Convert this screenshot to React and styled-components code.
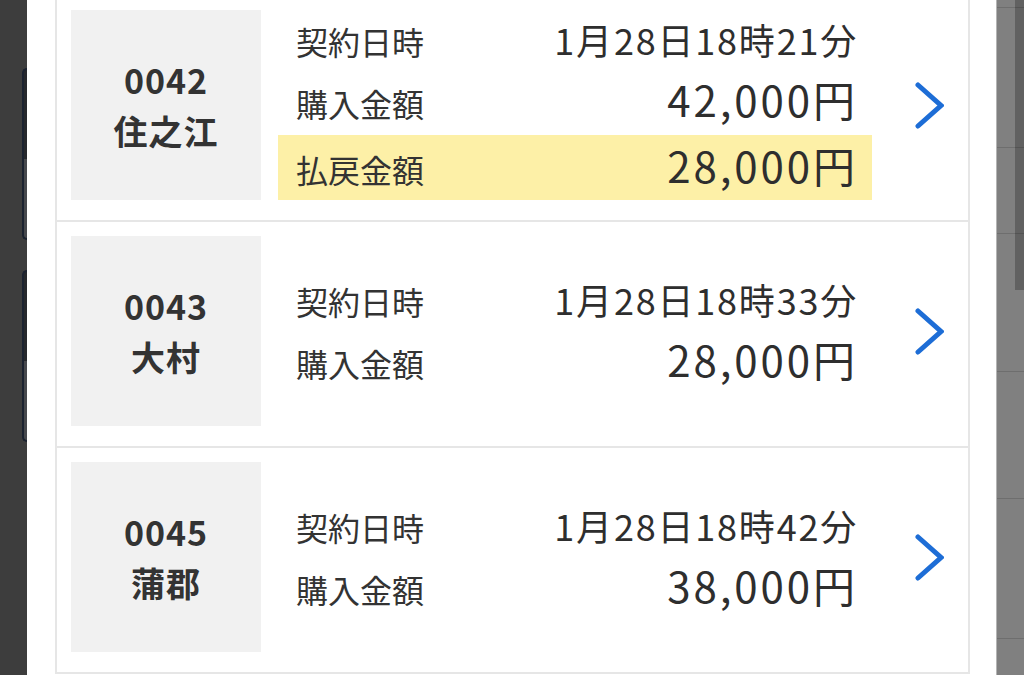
import React from "react"
import styled, { createGlobalStyle } from "styled-components"

const GlobalStyle = createGlobalStyle`
  * {
    box-sizing: border-box;
    margin: 0;
    padding: 0;
  }
  body {
    margin: 0;
    overflow: hidden;
    background: #3d3d3d;
    font-family: "Noto Sans CJK JP", "Noto Sans", sans-serif;
    color: #333;
  }
`

const contracts = [
  { code: "0042", name: "住之江", date: "1月28日18時21分", amount: "42,000円", refund: "28,000円" },
  { code: "0043", name: "大村", date: "1月28日18時33分", amount: "28,000円" },
  { code: "0045", name: "蒲郡", date: "1月28日18時42分", amount: "38,000円" },
]

const Screen = styled.div`
  display: grid;
  grid-template-columns: 27px 969px 28px;
  height: 675px;
  overflow: hidden;
`

// dimmed page behind the modal
const LeftShade = styled.div`
  background: #3d3d3d;
  display: flex;
  flex-direction: column;
  align-items: flex-end;
  gap: 30px;
  padding-top: 68px;
`

const ShadeButton = styled.div`
  width: 5px;
  height: 172px;
  border: 2px solid #1b2230;
  border-right: none;
  border-radius: 9px 0 0 9px;
  background: linear-gradient(#26282c 53%, #46484c 53%);
`

const RightShade = styled.div`
  border-left: 1px solid #b4b4b4;
  background: linear-gradient(#616161, #616161) no-repeat 18px 0 / 10px 290px, #808080;
  display: flex;
  flex-direction: column;
`

const ShadeRow = styled.div`
  height: ${({ h }) => h}px;
  flex-shrink: 0;
  border-bottom: 1px solid rgba(0, 0, 0, 0.14);
`

const Modal = styled.div`
  background: #fff;
  padding: 0 26px 0 28px;
  overflow: hidden;
`

const List = styled.ul`
  list-style: none;
  margin-top: -6px;
  border: 2px solid #e6e6e6;
`

const Card = styled.li`
  display: flex;
  align-items: center;
  padding: 14px 0 20px 14px;
  border-bottom: 2px solid #e6e6e6;
  &:last-child {
    border-bottom: none;
  }
`

const CodeBox = styled.div`
  width: 190px;
  height: 190px;
  flex-shrink: 0;
  background: #f1f1f1;
  display: flex;
  flex-direction: column;
  align-items: center;
  justify-content: center;
  font-size: 34px;
  font-weight: 700;
  line-height: 51px;
  letter-spacing: 1px;
  color: #333;
`

const Details = styled.div`
  flex: 1;
  margin-left: 17px;
  display: flex;
  flex-direction: column;
`

const Row = styled.div`
  display: flex;
  align-items: baseline;
  justify-content: space-between;
  line-height: 58px;
  padding: ${({ highlight }) => (highlight ? "1px 14px 2px 18px" : "0 14px 0 18px")};
  margin-top: ${({ highlight }) => (highlight ? "3px" : "0")};
  background: ${({ highlight }) => (highlight ? "#fdf0a7" : "transparent")};
`

const Label = styled.span`
  font-size: 32px;
  color: #333;
`

const Value = styled.span`
  font-size: ${({ size }) => size}px;
  letter-spacing: ${({ spacing }) => spacing};
  color: #2e2e2e;
`

const ArrowCell = styled.div`
  width: 96px;
  flex-shrink: 0;
  display: flex;
  align-items: center;
  padding-left: 43px;
`

const Chevron = () => (
  <svg width="29" height="47" viewBox="0 0 29 47" fill="none">
    <polyline
      points="3,3 26,23.5 3,44"
      stroke="#1d6dd6"
      strokeWidth="5"
      strokeLinecap="round"
      strokeLinejoin="miter"
    />
  </svg>
)

const ContractCard = ({ code, name, date, amount, refund }) => (
  <Card>
    <CodeBox>
      <span>{code}</span>
      <span>{name}</span>
    </CodeBox>
    <Details>
      <Row>
        <Label>契約日時</Label>
        <Value size={36} spacing="0.05em">{date}</Value>
      </Row>
      <Row>
        <Label>購入金額</Label>
        <Value size={42} spacing="0.07em">{amount}</Value>
      </Row>
      {refund && (
        <Row highlight>
          <Label>払戻金額</Label>
          <Value size={42} spacing="0.07em">{refund}</Value>
        </Row>
      )}
    </Details>
    <ArrowCell>
      <Chevron />
    </ArrowCell>
  </Card>
)

export default function App() {
  return (
    <>
      <GlobalStyle />
      <Screen>
        <LeftShade>
          <ShadeButton />
          <ShadeButton />
        </LeftShade>
        <Modal>
          <List>
            {contracts.map((c) => (
              <ContractCard key={c.code} {...c} />
            ))}
          </List>
        </Modal>
        <RightShade>
          {[8, 140, 86, 138, 127, 140].map((h, i) => (
            <ShadeRow key={i} h={h} />
          ))}
        </RightShade>
      </Screen>
    </>
  )
}
